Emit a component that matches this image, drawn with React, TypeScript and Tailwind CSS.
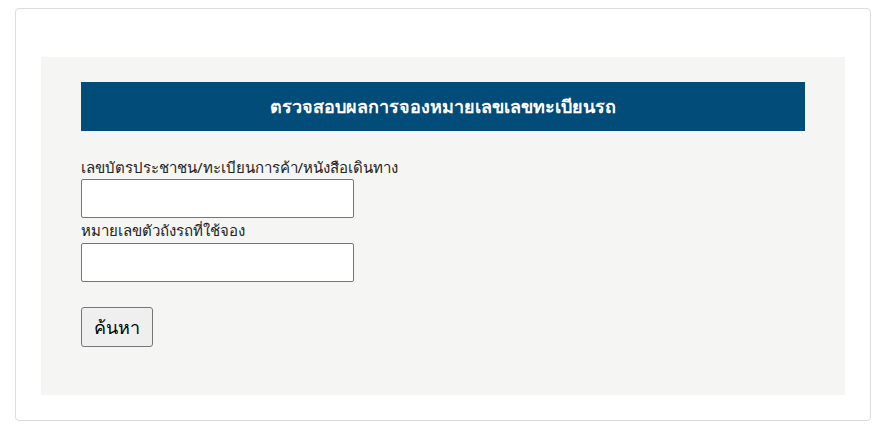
import React from 'react';

export default function App() {
  return (
    <div className="bg-white w-[885px] h-[430px] pt-[8px] pl-[15px] font-['Tahoma','Noto_Sans','Liberation_Sans',sans-serif] text-[#222]">
      <div className="w-[856px] h-[413px] border border-[#dcdcdc] rounded-[4px] pt-[48px] px-[25px] pb-[25px]">
        <div className="bg-[#f5f5f3] h-[338px] pt-[25px] px-[40px]">
          <div className="h-[49px] bg-[#024c7a] flex items-center justify-center text-white font-bold text-[18px]">
            ตรวจสอบผลการจองหมายเลขเลขทะเบียนรถ
          </div>

          {/* search form */}
          <form className="flex flex-col items-start mt-[24px]" onSubmit={(e) => e.preventDefault()}>
            <label className="h-[24px] text-[15px] leading-[24px]">
              เลขบัตรประชาชน/ทะเบียนการค้า/หนังสือเดินทาง
            </label>
            <input
              type="text"
              className="w-[273px] h-[39px] bg-white border border-[#767676] rounded-[2px] px-2"
            />
            <label className="h-[25px] text-[15px] leading-[25px]">
              หมายเลขตัวถังรถที่ใช้จอง
            </label>
            <input
              type="text"
              className="w-[273px] h-[39px] bg-white border border-[#767676] rounded-[2px] px-2"
            />
            <button
              type="submit"
              className="mt-[25px] w-[72px] h-[40px] bg-[#efefef] border border-[#767676] rounded-[3px] text-[18px] text-black"
            >
              ค้นหา
            </button>
          </form>
        </div>
      </div>
    </div>
  );
}
